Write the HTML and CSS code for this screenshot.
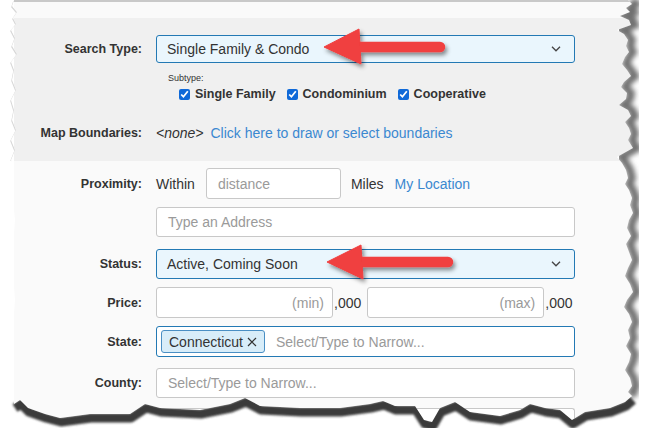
FILE: index.html
```html
<!DOCTYPE html>
<html lang="en">
<head>
    <meta charset="UTF-8">
    <meta name="viewport" content="width=device-width, initial-scale=1.0">
    <title>Property Search</title>
    <link rel="stylesheet" href="styles.css">
</head>
<body>

    <div class="sheet">
        <div class="top-strip"></div>

        <section class="section-gray">
            <div class="row">
                <label class="lbl">Search Type:</label>
                <div class="control select">
                    <span>Single Family &amp; Condo</span>
                    <svg class="chevron" width="10" height="6" viewBox="0 0 10 6"><path d="M1 0.8 L5 4.8 L9 0.8" fill="none" stroke="#444" stroke-width="1.3"/></svg>
                </div>
            </div>
            <div class="subtype-title">Subtype:</div>
            <div class="checks">
                <label class="check"><input type="checkbox" checked> Single Family</label>
                <label class="check"><input type="checkbox" checked> Condominium</label>
                <label class="check"><input type="checkbox" checked> Cooperative</label>
            </div>
            <div class="row row-map">
                <label class="lbl">Map Boundaries:</label>
                <span class="none">&lt;none&gt;</span>
                <a class="link" href="#">Click here to draw or select boundaries</a>
            </div>
        </section>

        <section class="section-white">
            <div class="row row-prox">
                <label class="lbl">Proximity:</label>
                <span class="txt">Within</span>
                <div class="control distance placeholder">distance</div>
                <span class="txt">Miles</span>
                <a class="link" href="#">My Location</a>
            </div>
            <div class="row row-addr">
                <span class="lbl"></span>
                <div class="control placeholder">Type an Address</div>
            </div>
            <div class="row row-status">
                <label class="lbl">Status:</label>
                <div class="control select">
                    <span>Active, Coming Soon</span>
                    <svg class="chevron" width="10" height="6" viewBox="0 0 10 6"><path d="M1 0.8 L5 4.8 L9 0.8" fill="none" stroke="#444" stroke-width="1.3"/></svg>
                </div>
            </div>
            <div class="row row-price">
                <label class="lbl">Price:</label>
                <div class="control price placeholder">(min)</div>
                <span class="thousand">,000</span>
                <div class="control price placeholder">(max)</div>
                <span class="thousand">,000</span>
            </div>
            <div class="row row-state">
                <label class="lbl">State:</label>
                <div class="control multi">
                    <span class="tag">Connecticut
                        <svg width="10" height="10" viewBox="0 0 10 10"><path d="M1 1 L9 9 M9 1 L1 9" stroke="#333" stroke-width="1.2"/></svg>
                    </span>
                    <span class="placeholder">Select/Type to Narrow...</span>
                </div>
            </div>
            <div class="row row-county">
                <label class="lbl">County:</label>
                <div class="control placeholder">Select/Type to Narrow...</div>
            </div>
            <div class="row row-next">
                <span class="lbl"></span>
                <div class="control next"></div>
            </div>
        </section>
    </div>

    <!-- torn paper edges + callout arrows -->
    <svg class="overlay" width="646" height="428" viewBox="0 0 646 428">
        <defs>
            <clipPath id="outside">
                <path d="M0,0 L14,0 L12,6 L17,12 L13,18 L16,24 L11,30 L15,38 L12,46 L17,54 L11,62 L14,70 L12,80 L16,90 L11,100 L14,110 L12,120 L16,130 L11,140 L15,150 L11,160 L14,170 L12,190 L15,220 L12,260 L15,300 L12,340 L14,380 L14,404 L20,400 L28,408 L45,414 L60,418 L90,414 L130,414 L145,404 L160,408 L200,410 L230,404 L245,398 L260,406 L300,408 L340,408 L370,404 L383,401 L395,406 L415,406 L424,420 L432,422 L440,408 L455,402 L470,412 L500,416 L520,410 L530,404 L545,408 L560,410 L572,420 L585,412 L610,408 L625,402 L632,396 L628,392 L632,386 L630,378 L625,370 L629,362 L631,354 L626,346 L630,338 L628,330 L632,322 L629,314 L624,307 L627,300 L633,292 L630,284 L625,276 L628,268 L632,260 L629,252 L626,244 L631,236 L627,228 L629,220 L633,213 L630,205 L632,198 L629,190 L625,184 L628,178 L626,170 L622,163 L617,157 L633,148 L628,140 L631,134 L629,128 L625,122 L631,116 L628,110 L619,105 L626,99 L627,93 L621,87 L624,82 L631,76 L627,70 L622,64 L625,57 L629,52 L626,46 L628,40 L624,34 L617,30 L631,25 L629,20 L620,16 L630,12 L626,8 L632,4 L628,0 L646,0 L646,428 L0,428 Z"/>
            </clipPath>
            <filter id="soft" x="-10%" y="-10%" width="120%" height="120%">
                <feGaussianBlur stdDeviation="2.6"/>
            </filter>
            <filter id="edge" x="-10%" y="-10%" width="120%" height="120%">
                <feGaussianBlur stdDeviation="0.8"/>
            </filter>
            <filter id="drop" x="-20%" y="-40%" width="140%" height="180%">
                <feDropShadow dx="2" dy="3" stdDeviation="2" flood-color="#000" flood-opacity="0.45"/>
            </filter>
        </defs>

        <path d="M0,0 L14,0 L12,6 L17,12 L13,18 L16,24 L11,30 L15,38 L12,46 L17,54 L11,62 L14,70 L12,80 L16,90 L11,100 L14,110 L12,120 L16,130 L11,140 L15,150 L11,160 L14,170 L12,190 L15,220 L12,260 L15,300 L12,340 L14,380 L14,404 L20,400 L28,408 L45,414 L60,418 L90,414 L130,414 L145,404 L160,408 L200,410 L230,404 L245,398 L260,406 L300,408 L340,408 L370,404 L383,401 L395,406 L415,406 L424,420 L432,422 L440,408 L455,402 L470,412 L500,416 L520,410 L530,404 L545,408 L560,410 L572,420 L585,412 L610,408 L625,402 L632,396 L628,392 L632,386 L630,378 L625,370 L629,362 L631,354 L626,346 L630,338 L628,330 L632,322 L629,314 L624,307 L627,300 L633,292 L630,284 L625,276 L628,268 L632,260 L629,252 L626,244 L631,236 L627,228 L629,220 L633,213 L630,205 L632,198 L629,190 L625,184 L628,178 L626,170 L622,163 L617,157 L633,148 L628,140 L631,134 L629,128 L625,122 L631,116 L628,110 L619,105 L626,99 L627,93 L621,87 L624,82 L631,76 L627,70 L622,64 L625,57 L629,52 L626,46 L628,40 L624,34 L617,30 L631,25 L629,20 L620,16 L630,12 L626,8 L632,4 L628,0 L646,0 L646,428 L0,428 Z" fill="#fff"/>

        <g clip-path="url(#outside)">
            <polyline transform="translate(4,0)" filter="url(#soft)" fill="none" stroke="#6f6f6f" stroke-width="8"
                points="628,0 632,4 626,8 630,12 620,16 629,20 631,25 617,30 624,34 628,40 626,46 629,52 625,57 622,64 627,70 631,76 624,82 621,87 627,93 626,99 619,105 628,110 631,116 625,122 629,128 631,134 628,140 633,148 617,157 622,163 626,170 628,178 625,184 629,190 632,198 630,205 633,213 629,220 627,228 631,236 626,244 629,252 632,260 628,268 625,276 630,284 633,292 627,300 624,307 629,314 632,322 628,330 630,338 626,346 631,354 629,362 625,370 630,378 632,386 628,392 632,396"/>
            <polyline transform="translate(1,4)" filter="url(#edge)" fill="none" stroke="#3a3a3a" stroke-width="9" stroke-linejoin="round"
                points="14,404 20,400 28,408 45,414 60,418 90,414 130,414 145,404 160,408 200,410 230,404 245,398 260,406 300,408 340,408 370,404 383,401 395,406 415,406 424,420 432,422 440,408 455,402 470,412 500,416 520,410 530,404 545,408 560,410 572,420 585,412 610,408 625,402 632,396"/>
            <polyline transform="translate(0,1)" fill="none" stroke="#d8d8d8" stroke-width="1.5"
                points="14,0 12,6 17,12 13,18 16,24 11,30 15,38 12,46 17,54 11,62 14,70 12,80 16,90 11,100 14,110 12,120 16,130 11,140 15,150 11,160"/>
        </g>

        <g filter="url(#drop)" fill="#f03f3f" stroke="#f03f3f">
            <line x1="356" y1="47" x2="440" y2="47" stroke-width="10.5" stroke-linecap="round"/>
            <polygon points="324,47 359,29 361,64" stroke-width="1" stroke-linejoin="round"/>
        </g>
        <g filter="url(#drop)" fill="#f03f3f" stroke="#f03f3f">
            <line x1="358" y1="262" x2="448" y2="262" stroke-width="10.5" stroke-linecap="round"/>
            <polygon points="327,262 361,245 363,279" stroke-width="1" stroke-linejoin="round"/>
        </g>
    </svg>

</body>
</html>
```

FILE: styles.css
```css
body {
    margin: 0;
    width: 646px;
    height: 428px;
    overflow: hidden;
    position: relative;
    background-color: #fff;
    font-family: "Liberation Sans", Arial, sans-serif;
    color: #333;
}

.sheet {
    margin-left: 14px;
    width: 622px;
}

.top-strip {
    height: 18px;
    box-sizing: border-box;
    border-top: 2px solid #c9c9c9;
    background-color: #fafafa;
}

.section-gray {
    background-color: #f0f0f0;
    padding: 17px 0 18px;
}

.section-white {
    background-color: #fafafa;
    padding: 7px 0 0;
}

.row {
    display: flex;
    align-items: center;
}

.lbl {
    flex: none;
    width: 128px;
    margin-right: 14px;
    text-align: right;
    font-weight: bold;
    font-size: 12.5px;
}

.control {
    flex: none;
    width: 419px;
    height: 30px;
    box-sizing: border-box;
    display: flex;
    align-items: center;
    padding: 0 11px;
    border: 1px solid #c8c8c8;
    border-radius: 3px;
    background-color: #fff;
    font-size: 14px;
}

.placeholder {
    color: #9a9a9a;
}

.select {
    justify-content: space-between;
    padding: 0 13px 0 10px;
    background-color: #eaf6fd;
    border-color: #2379b4;
}

.section-gray .select {
    height: 28px;
}

.subtype-title {
    margin: 10px 0 0 154px;
    font-size: 9px;
    line-height: 11px;
}

.checks {
    display: flex;
    height: 16px;
    align-items: center;
    margin: 2px 0 0 165px;
}

.check {
    display: flex;
    align-items: center;
    margin-right: 11px;
    font-size: 12.5px;
    font-weight: bold;
}

.check input {
    width: 11px;
    height: 11px;
    margin: 0 5px 0 0;
    accent-color: #0f69d8;
}

.row-map {
    margin-top: 21px;
    height: 20px;
}

.none {
    font-style: italic;
    font-size: 14px;
    margin-right: 7px;
}

.link {
    color: #3b88d0;
    text-decoration: none;
    font-size: 14px;
}

.txt {
    font-size: 14px;
}

.row-prox .distance {
    width: 135px;
    height: 31px;
    margin: 0 10px 0 11px;
}

.row-prox .link {
    margin-left: 11px;
}

.row-addr {
    margin-top: 8px;
}

.row-status {
    margin-top: 12px;
}

.row-price {
    margin-top: 8px;
}

.price {
    width: 177px;
    height: 31px;
    justify-content: flex-end;
    padding-right: 8px;
}

.thousand {
    font-size: 14px;
    margin: 0 6px 0 1px;
}

.row-state {
    margin-top: 8px;
}

.multi {
    height: 31px;
    padding: 0 4px;
    border-color: #2379b4;
}

.tag {
    display: flex;
    align-items: center;
    gap: 4px;
    height: 23px;
    box-sizing: border-box;
    padding: 0 7px 0 7px;
    margin-right: 11px;
    background-color: #d8edf9;
    border: 1px solid #4a8fc4;
    border-radius: 3px;
    color: #333;
}

.row-county {
    margin-top: 11px;
}

.row-next {
    margin-top: 10px;
}

.control.next {
    height: 20px;
    border-bottom: none;
    border-radius: 3px 3px 0 0;
}

.overlay {
    position: absolute;
    left: 0;
    top: 0;
    pointer-events: none;
}
```
